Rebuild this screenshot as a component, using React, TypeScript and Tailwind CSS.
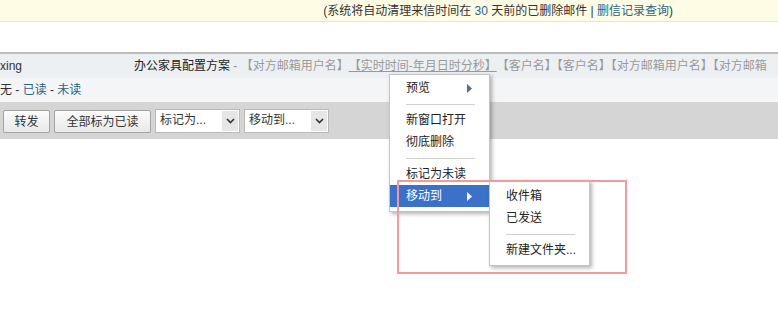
import React from "react";

const font = "font-['Liberation_Sans','Noto_Sans_CJK_SC',sans-serif]";

function Chevron() {
  return (
    <svg width="9" height="6" viewBox="0 0 9 6">
      <path d="M1 1l3.5 3.5L8 1" fill="none" stroke="#333" strokeWidth="1.6" />
    </svg>
  );
}

function Arrow({ white }: { white?: boolean }) {
  return (
    <svg width="5" height="9" viewBox="0 0 5 9">
      <path d="M0 0l5 4.5L0 9z" fill={white ? "#fff" : "#5b6a85"} />
    </svg>
  );
}

function Button({ label, w }: { label: string; w: string }) {
  return (
    <div
      className={`${w} mt-[1px] h-[23px] flex items-center justify-center rounded-[2px] border border-[#a3a3a3] bg-gradient-to-b from-[#fbfbfb] to-[#e9e9e9] text-[12px] text-[#333]`}
    >
      {label}
    </div>
  );
}

function Select({ label, w }: { label: string; w: string }) {
  return (
    <div className={`${w} h-[24px] flex items-center border border-[#b9b9b9] bg-white pl-[4px] pr-[1px]`}>
      <span className="flex-1 -mt-[3px] text-[12px] text-[#333]">{label}</span>
      <span className="w-[16px] h-[20px] flex items-center justify-center bg-[#e6e6e6]">
        <Chevron />
      </span>
    </div>
  );
}

function Item({ label, arrow, active }: { label: string; arrow?: boolean; active?: boolean }) {
  return (
    <div
      className={`h-[22px] flex items-center pl-[16px] pr-[17px] text-[12px] whitespace-nowrap ${
        active ? "bg-[#3b71c8] text-white" : "text-[#222]"
      }`}
    >
      <span className="flex-1">{label}</span>
      {arrow && <Arrow white={active} />}
    </div>
  );
}

function Sep() {
  return (
    <div className="h-[10px] flex items-center pl-[16px] pr-[14px]">
      <div className="h-px w-full bg-[#cfcfcf]" />
    </div>
  );
}

export default function App() {
  return (
    <div className={`relative w-[778px] h-[326px] overflow-hidden bg-white ${font} leading-[16px]`}>
      <div className="h-[22px] flex items-center justify-end pr-[105px] bg-[#fffce6] border-b border-[#e4e4e4] text-[12px] text-[#333]">
        <span>
          (系统将自动清理来信时间在 <span className="text-[#2b6389]">30</span> 天前的已删除邮件 |{" "}
          <span className="text-[#2b6389]">删信记录查询</span>)
        </span>
      </div>

      <div className="h-[30px]" />

      <div className="border-t-2 border-[#bdbdbd]">
        <div className="h-[24px] flex items-center overflow-hidden bg-[#edf0f3] text-[12px] whitespace-nowrap">
          <span className="w-[134px] shrink-0 text-[#333]">xing</span>
          <span className="text-[#222]">办公家具配置方案</span>
          <span className="text-[#888]">&nbsp;-&nbsp;</span>
          <span className="text-[#9a9a9a]">【对方邮箱用户名】</span>
          <span className="text-[#9a9a9a] underline">【实时时间-年月日时分秒】</span>
          <span className="text-[#9a9a9a]">【客户名】【客户名】【对方邮箱用户名】【对方邮箱</span>
        </div>
        <div className="h-[24px] flex items-center bg-[#f4f5f6] text-[12px] text-[#333]">
          无 -&nbsp;<span className="text-[#2b6389]">已读</span>&nbsp;-&nbsp;
          <span className="text-[#2b6389]">未读</span>
        </div>
        <div className="h-[37px] flex items-start gap-[4px] pl-[3px] pt-[7px] bg-[#d5d5d5]">
          <Button label="转发" w="w-[47px]" />
          <Button label="全部标为已读" w="w-[97px]" />
          <Select label="标记为..." w="w-[85px]" />
          <Select label="移动到..." w="w-[85px]" />
        </div>
      </div>

      <div className="absolute left-[389px] top-[74px] w-[101px] pt-[2px] pb-[4px] bg-white border border-[#c4c4c4] shadow-[2px_2px_4px_rgba(0,0,0,0.3)]">
        <Item label="预览" arrow />
        <Sep />
        <Item label="新窗口打开" />
        <Item label="彻底删除" />
        <Sep />
        <Item label="标记为未读" />
        <Item label="移动到" arrow active />
      </div>

      <div className="absolute left-[489px] top-[180px] w-[101px] pt-[4px] pb-[4px] bg-white border border-[#c4c4c4] shadow-[2px_2px_4px_rgba(0,0,0,0.3)]">
        <Item label="收件箱" />
        <Item label="已发送" />
        <Sep />
        <Item label="新建文件夹..." />
      </div>

      <div className="absolute left-[397px] top-[180px] w-[230px] h-[94px] border-2 border-[#f39a9a]" />
    </div>
  );
}
